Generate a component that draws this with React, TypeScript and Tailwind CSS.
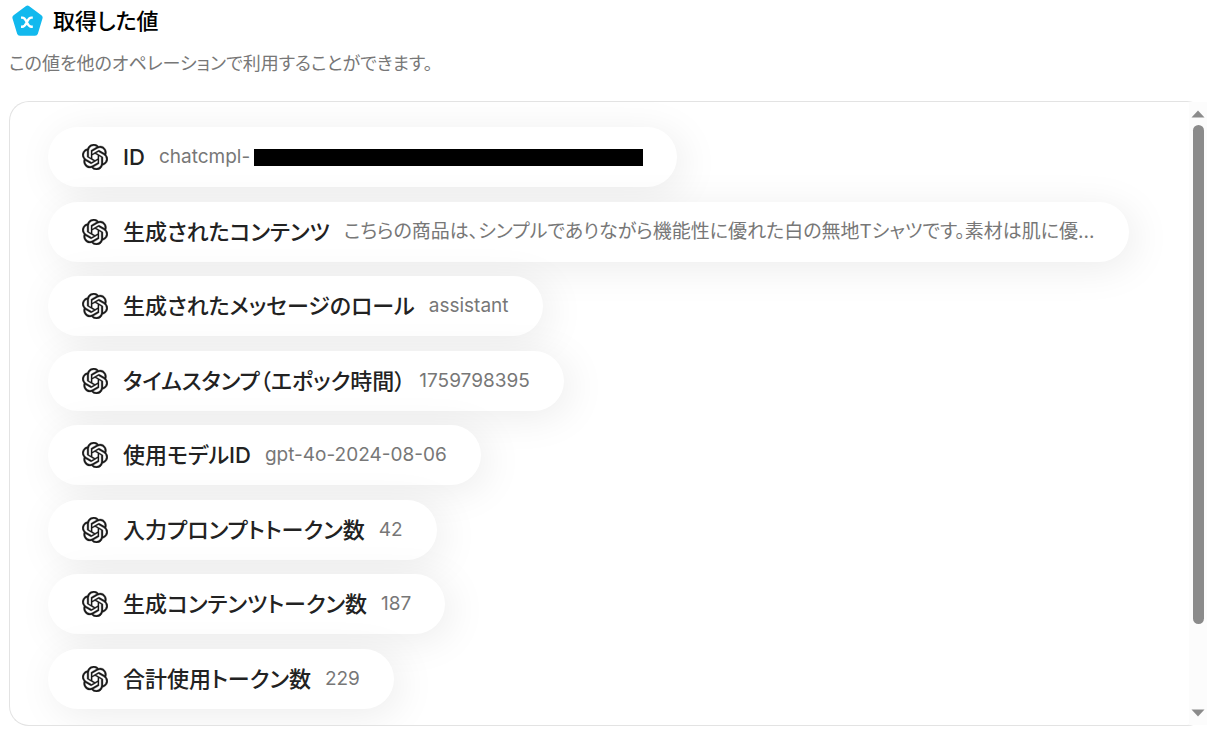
import React from 'react';
import { SiOpenai } from 'react-icons/si';

interface OutputValue {
  label: string;
  value: string;
  masked?: boolean;
}

const OUTPUT_VALUES: OutputValue[] = [
  { label: 'ID', value: 'chatcmpl-', masked: true },
  { label: '生成されたコンテンツ', value: 'こちらの商品は、シンプルでありながら機能性に優れた白の無地Tシャツです。素材は肌に優...' },
  { label: '生成されたメッセージのロール', value: 'assistant' },
  { label: 'タイムスタンプ（エポック時間）', value: '1759798395' },
  { label: '使用モデルID', value: 'gpt-4o-2024-08-06' },
  { label: '入力プロンプトトークン数', value: '42' },
  { label: '生成コンテンツトークン数', value: '187' },
  { label: '合計使用トークン数', value: '229' },
];

const OperationIcon: React.FC = () => (
  <svg className="size-8 shrink-0" viewBox="0 0 32 32" aria-hidden="true">
    <path
      d="M16.5 3.6 L28.6 12.6 L24 27.8 H9 L4.4 12.6 Z"
      fill="#12b9ee"
      stroke="#12b9ee"
      strokeWidth="6"
      strokeLinejoin="round"
    />
    <path
      d="M10 12.6 H11.2 C13.8 12.6 14.4 14.4 15.8 17.2 C17.2 20 17.8 21.8 20.4 21.8 H21.8 M21.8 12.6 H20.4 C17.8 12.6 17.2 14.4 15.8 17.2 C14.4 20 13.8 21.8 11.2 21.8 H10"
      fill="none"
      stroke="#fff"
      strokeWidth="2.4"
    />
  </svg>
);

const ValueChip: React.FC<OutputValue> = ({ label, value, masked }) => (
  <li className="flex h-[60px] max-w-full items-center rounded-full bg-white px-[34px] shadow-[6px_6px_40px_rgba(0,0,0,0.08)]">
    <SiOpenai size={26} className="mr-[15px] shrink-0 stroke-[#1a1a1a] stroke-[0.3] text-[#1a1a1a]" aria-hidden="true" />
    <span className="mr-3.5 shrink-0 text-[22px] leading-8 font-medium text-[#222]">{label}</span>
    <span className="truncate text-[19px] leading-7 text-[#777]">{value}</span>
    {masked && <span className="ml-1 h-[17px] w-[389px] shrink-0 bg-black" />}
  </li>
);

// Classic scrollbar with arrow buttons at both ends
const ScrollTrack: React.FC = () => (
  <div className="flex w-[18px] shrink-0 flex-col items-center bg-[#fcfcfc] py-2">
    <svg width="14" height="8" viewBox="0 0 14 8" aria-hidden="true">
      <path d="M0.5 7.5 L7 0.5 L13.5 7.5 Z" fill="#8b8b8b" />
    </svg>
    <div className="mt-[7px] mb-[85px] w-[11px] flex-1 rounded-full bg-[#8b8b8b]" />
    <svg width="14" height="8" viewBox="0 0 14 8" aria-hidden="true">
      <path d="M0.5 0.5 L7 7.5 L13.5 0.5 Z" fill="#8b8b8b" />
    </svg>
  </div>
);

export default function App() {
  return (
    <main
      lang="ja"
      className="bg-white pr-[5px] pb-1.5 pl-[9px] pt-[5px] font-['Inter','Noto_Sans_CJK_JP',sans-serif] [font-feature-settings:'palt']"
    >
      <header className="pl-0.5">
        <div className="flex items-center gap-2.5">
          <OperationIcon />
          <h1 className="text-[22px] leading-8 font-medium text-black">取得した値</h1>
        </div>
      </header>
      <p className="mt-[15px] text-[18px] leading-6 text-[#777]">この値を他のオペレーションで利用することができます。</p>

      <section className="mt-[25px] flex rounded-[20px] border border-r-0 border-[#e3e3e3]">
        <ul className="flex min-h-[623px] min-w-0 flex-1 flex-col items-start justify-between overflow-hidden rounded-l-[19px] pt-[25px] pr-[38px] pb-4 pl-[38px]">
          {OUTPUT_VALUES.map((item) => (
            <ValueChip key={item.label} {...item} />
          ))}
        </ul>
        <ScrollTrack />
      </section>
    </main>
  );
}
